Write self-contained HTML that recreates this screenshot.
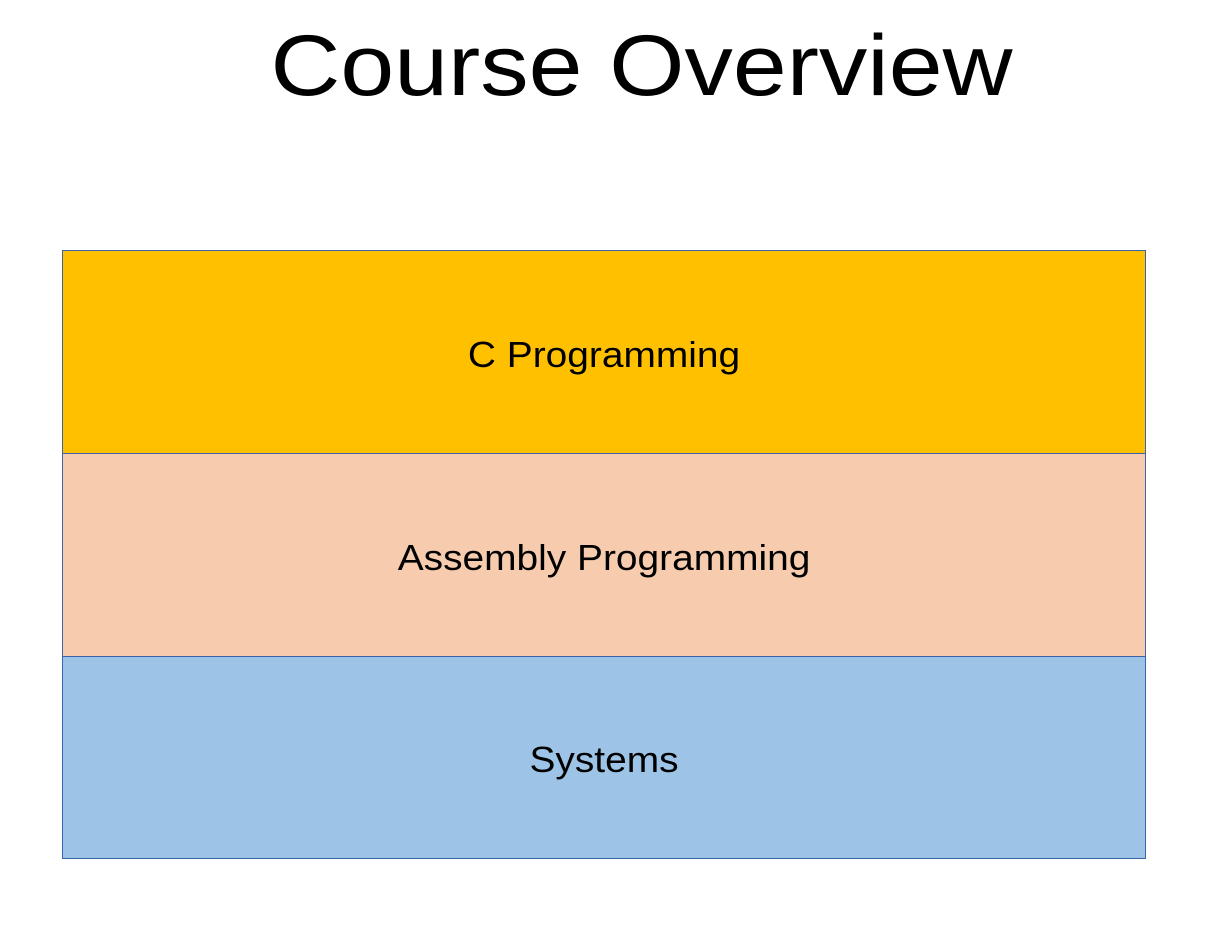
<!DOCTYPE html>
<html><head><meta charset="utf-8"><style>
html,body{margin:0;padding:0;background:#fff;width:1227px;height:947px;overflow:hidden;font-family:"Liberation Sans",sans-serif;}
.title{position:absolute;left:0;width:1283px;top:16px;text-align:center;font-size:86px;line-height:100px;color:#000;transform:scaleX(1.125);transform-origin:641.5px 0;}
.box{position:absolute;left:62px;width:1084px;border:1.5px solid #3B64A8;display:flex;align-items:center;justify-content:center;font-size:36px;color:#000;box-sizing:border-box;padding-top:5px;}
.box span{display:inline-block;transform:scaleX(1.08);}
</style></head><body>
<div class="title">Course Overview</div>
<div class="box" style="top:250px;height:204px;background:#FFC000;"><span>C Programming</span></div>
<div class="box" style="top:453px;height:204px;background:#F7CBAD;"><span>Assembly Programming</span></div>
<div class="box" style="top:656px;height:203px;background:#9DC3E6;"><span>Systems</span></div>
</body></html>
